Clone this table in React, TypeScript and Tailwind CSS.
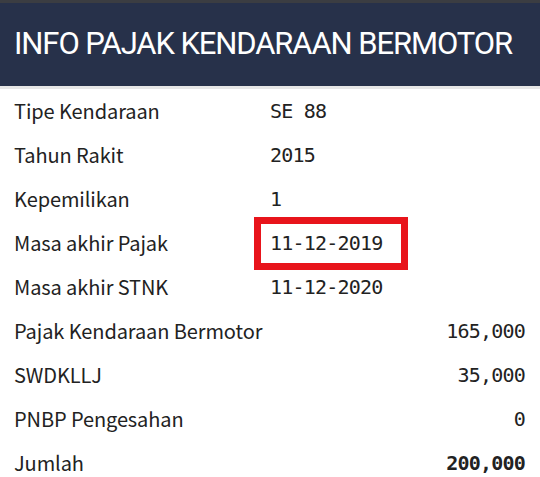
import React from "react";

const font = { fontFamily: '"Noto Sans CJK KR", "Noto Sans", sans-serif' };
const mono = { fontFamily: '"DejaVu Sans Mono", "Liberation Mono", monospace', fontSize: "20px", letterSpacing: "-0.8px" };

function Row2({ label, value, boxed }: { label: string; value: string; boxed?: boolean }) {
  return (
    <div className="flex h-[44px] items-center">
      <div className="w-[256px] pl-[14px]">{label}</div>
      {boxed ? (
        <div className="-ml-[2px] flex h-[53px] w-[154px] items-center border-[7px] border-[#e8141b] pl-[9px]" style={mono}>
          {value}
        </div>
      ) : (
        <div className="pl-[14px]" style={mono}>{value}</div>
      )}
    </div>
  );
}

function RowR({ label, value, bold }: { label: string; value: string; bold?: boolean }) {
  return (
    <div className="flex h-[44px] items-center justify-between pl-[14px] pr-[15px]">
      <div>{label}</div>
      <div className={bold ? "font-semibold" : ""} style={mono}>{value}</div>
    </div>
  );
}

export default function App() {
  return (
    <div className="h-[477px] w-[540px] overflow-hidden bg-white text-[20px] tracking-[-0.1px] text-[#222]" style={font}>
      <div className="h-[3px] bg-[#3b3d42]" />
      <div className="flex h-[83px] items-center bg-[#27314a] pl-[14px]">
        <span className="whitespace-nowrap text-[31px] text-white tracking-[-1.1px]" style={{ fontFamily: 'Roboto, "Liberation Sans", Arial, sans-serif' }}>
          INFO PAJAK KENDARAAN BERMOTOR
        </span>
      </div>
      <div className="h-[3px] bg-[#e6e6e6]" />
      <Row2 label="Tipe Kendaraan" value="SE 88" />
      <Row2 label="Tahun Rakit" value="2015" />
      <Row2 label="Kepemilikan" value="1" />
      <Row2 label="Masa akhir Pajak" value="11-12-2019" boxed />
      <Row2 label="Masa akhir STNK" value="11-12-2020" />
      <RowR label="Pajak Kendaraan Bermotor" value="165,000" />
      <RowR label="SWDKLLJ" value="35,000" />
      <RowR label="PNBP Pengesahan" value="0" />
      <RowR label="Jumlah" value="200,000" bold />
    </div>
  );
}
